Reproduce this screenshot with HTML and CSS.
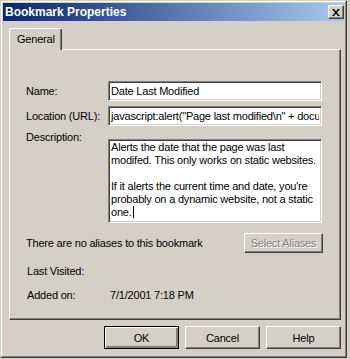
FILE: index.html
```html
<!DOCTYPE html>
<html lang="en">
<head>
  <meta charset="UTF-8" />
  <title>Bookmark Properties</title>
  <link rel="stylesheet" href="styles.css">
</head>
<body>
  <div class="window">
    <div class="frame">
      <div class="titlebar">
        <span class="title">Bookmark Properties</span>
        <button class="close" aria-label="Close">
          <svg width="8" height="7" viewBox="0 0 8 7"><path d="M0 0h2l2 2.5L6 0h2L5 3.5 8 7H6L4 4.5 2 7H0l3-3.5z" fill="#000"/></svg>
        </button>
      </div>

      <div class="content">
        <div class="tabs">
          <div class="tab">General</div>
        </div>

        <div class="panel">
          <div class="row">
            <label class="label">Name:</label>
            <input class="field" type="text" value="Date Last Modified" />
          </div>
          <div class="row">
            <label class="label">Location (URL):</label>
            <input class="field" type="text" value='javascript:alert("Page last modified\n" + document.lastModified)' />
          </div>
          <div class="row row-desc">
            <label class="label label-desc">Description:</label>
            <div class="memo">Alerts the date that the page was last<br>modifed. This only works on static websites.<br><br>If it alerts the current time and date, you're<br>probably on a dynamic website, not a static<br>one.<span class="caret"></span></div>
          </div>
          <div class="row row-alias">
            <span>There are no aliases to this bookmark</span>
            <button class="btn btn-alias" disabled>Select Aliases</button>
          </div>
          <div class="info info-first">
            <span class="info-label">Last Visited:</span>
          </div>
          <div class="info">
            <span class="info-label">Added on:</span>
            <span>7/1/2001 7:18 PM</span>
          </div>
        </div>

        <div class="buttons">
          <button class="btn btn-default">OK</button>
          <button class="btn">Cancel</button>
          <button class="btn">Help</button>
        </div>
      </div>
    </div>
  </div>
</body>
</html>
```

FILE: styles.css
```css
* {
  margin: 0;
  padding: 0;
  box-sizing: border-box;
}

body {
  background: #d4d0c8;
  font-family: 'Liberation Sans', Arial, sans-serif;
  font-size: 11px;
  letter-spacing: -0.2px;
  color: #000;
  width: 350px;
  height: 359px;
  overflow: hidden;
}

.window {
  width: 347px;
  height: 358px;
  border: 1px solid;
  border-color: #d4d0c8 #404040 #404040 #d4d0c8;
}

.frame {
  height: 100%;
  border: 1px solid;
  border-color: #fff #808080 #808080 #fff;
  padding: 1px;
}

.titlebar {
  height: 18px;
  display: flex;
  align-items: center;
  justify-content: space-between;
  padding: 0 0 0 2px;
  background: linear-gradient(to right, #0a246a, #a6caf0);
}

.title {
  color: #fff;
  font-weight: bold;
  font-size: 12px;
  letter-spacing: 0;
}

.close {
  width: 16px;
  height: 14px;
  display: flex;
  align-items: center;
  justify-content: center;
  background: #d4d0c8;
  border: 1px solid;
  border-color: #fff #404040 #404040 #fff;
  box-shadow: inset -1px -1px #808080;
}

.content {
  padding: 7px 3px 0 6px;
}

.tabs {
  display: flex;
}

.tab {
  position: relative;
  z-index: 1;
  width: 53px;
  height: 22px;
  margin-bottom: -1px;
  padding: 4px 0 0 7px;
  background: #d4d0c8;
  border-top: 1px solid #fff;
  border-left: 1px solid #fff;
  border-right: 1px solid #404040;
  border-top-left-radius: 2px;
  border-top-right-radius: 2px;
  box-shadow: inset -1px 0 #808080;
}

.panel {
  height: 271px;
  padding: 31px 17px 0 16px;
  border: 1px solid;
  border-color: #fff #404040 #404040 #fff;
  box-shadow: inset -1px -1px #808080;
}

.row {
  display: flex;
  align-items: center;
  height: 20px;
  margin-bottom: 5px;
}

.label {
  width: 82px;
  flex-shrink: 0;
}

.field {
  width: 214px;
  height: 20px;
  padding: 0 2px;
  font-family: inherit;
  font-size: 11px;
  letter-spacing: -0.2px;
  color: #000;
  background: #fff;
  border: 1px solid;
  border-color: #808080 #fff #fff #808080;
  box-shadow: inset 1px 1px #404040, inset -1px -1px #d4d0c8;
  outline: none;
}

.row-desc {
  align-items: flex-start;
  height: 84px;
  margin-top: 13px;
  margin-bottom: 0;
}

.label-desc {
  margin-top: -8px;
}

.memo {
  width: 214px;
  height: 84px;
  padding: 1px 2px;
  line-height: 13px;
  white-space: nowrap;
  overflow: hidden;
  background: #fff;
  border: 1px solid;
  border-color: #808080 #fff #fff #808080;
  box-shadow: inset 1px 1px #404040, inset -1px -1px #d4d0c8;
}

.caret {
  display: inline-block;
  width: 1px;
  height: 12px;
  margin-left: 1px;
  vertical-align: -2px;
  background: #000;
}

.row-alias {
  justify-content: space-between;
  margin-top: 10px;
  margin-bottom: 0;
}

.info {
  display: flex;
  height: 13px;
  line-height: 13px;
  margin-top: 11px;
}

.info-first {
  margin-top: 12px;
}

.info-label {
  width: 84px;
  padding-left: 1px;
}

.btn {
  width: 75px;
  height: 23px;
  font-family: inherit;
  font-size: 11px;
  letter-spacing: -0.2px;
  color: #000;
  background: #d4d0c8;
  border: 1px solid;
  border-color: #fff #404040 #404040 #fff;
  box-shadow: inset -1px -1px #808080;
}

.btn-default {
  border-color: #000;
  box-shadow: inset 1px 1px #fff, inset -2px -2px #808080, inset -1px -1px #404040;
}

.btn-alias {
  width: 79px;
  height: 20px;
  color: #808080;
  text-shadow: 1px 1px #fff;
}

.buttons {
  display: flex;
  justify-content: flex-end;
  gap: 6px;
  margin-top: 6px;
  width: 332px;
}
```
